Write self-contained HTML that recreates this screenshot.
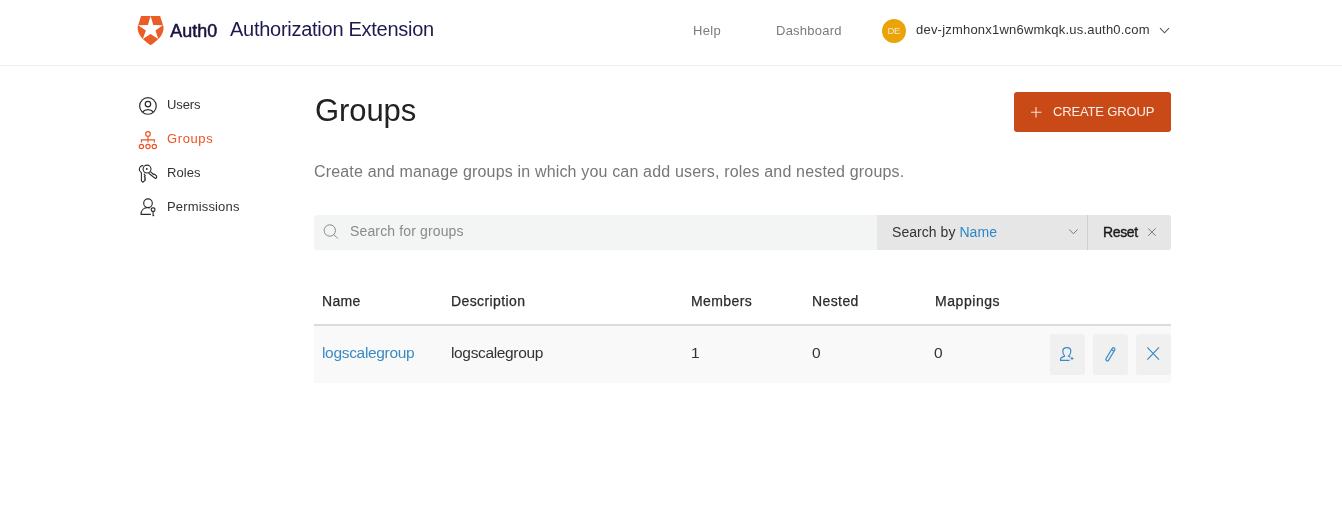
<!DOCTYPE html>
<html><head><meta charset="utf-8">
<style>
html,body{margin:0;padding:0;background:#fff;width:1342px;height:532px;overflow:hidden;position:relative;font-family:"Liberation Sans",sans-serif;}
.t{position:absolute;white-space:nowrap;line-height:1;will-change:transform;}
.a{position:absolute;}
.h{color:#2b2b2b;-webkit-text-stroke:0.25px #2b2b2b;}
</style></head><body>
<!-- header -->
<div class="a" style="left:0;top:65px;width:1342px;height:1px;background:#f0f0f0"></div>
<svg class="a" style="left:0;top:0;will-change:transform" width="460" height="60" viewBox="0 0 460 60">
  <path d="M141.1 16 L160.1 16 L163.6 27 C163.8 35.5 157.5 40.5 150.6 45.2 C143.7 40.5 137.4 35.5 137.6 27 Z" fill="#ea5d27"/>
  <polygon points="150.6,16 153.3,24.9 162.8,25.2 155.5,30.6 158.3,39.1 150.6,34 142.8,39.1 145.9,30.6 138.2,25.2 147.9,24.9" fill="#fff"/>
  <text x="170.3" y="37" font-family="Liberation Sans" font-size="19" fill="#16123f" stroke="#16123f" stroke-width="0.55" textLength="46.8" lengthAdjust="spacingAndGlyphs">Auth0</text>
</svg>
<div class="t" style="left:230px;top:19.1px;font-size:20px;letter-spacing:-0.27px;color:#1c1a4e">Authorization Extension</div>
<div class="t" style="left:692.6px;top:24.2px;letter-spacing:0.3px;font-size:13px;color:#7b7b7b">Help</div>
<div class="t" style="left:776px;top:24.2px;font-size:13px;letter-spacing:0.25px;color:#7b7b7b">Dashboard</div>
<div class="a" style="left:882px;top:19px;width:24px;height:24px;border-radius:50%;background:#eaa40a"></div>
<div class="t" style="left:882px;top:26px;width:23.4px;text-align:center;font-size:9.5px;letter-spacing:-0.35px;color:#fbe9c0">DE</div>
<div class="t" style="left:916px;top:23px;font-size:13px;letter-spacing:0.21px;color:#333">dev-jzmhonx1wn6wmkqk.us.auth0.com</div>
<svg class="a" style="left:1159px;top:27px" width="12" height="8" viewBox="0 0 12 8"><path d="M1 1.2 L5.5 5.8 L10 1.2" fill="none" stroke="#555" stroke-width="1.1"/></svg>

<!-- sidebar -->
<svg class="a" style="left:130px;top:90px" width="30" height="130" viewBox="130 90 30 130">
  <g fill="none" stroke="#2b2b2b" stroke-width="1.2">
    <circle cx="147.95" cy="105.95" r="8.3"/>
    <circle cx="147.95" cy="104.1" r="2.75"/>
    <path d="M142.6 112 C145.2 108.8 150.7 108.8 153.3 112"/>
  </g>
  <g fill="none" stroke="#eb5424" stroke-width="1.15">
    <circle cx="147.95" cy="133.9" r="2.3"/>
    <path d="M147.95 136.2 V142.5 M141.4 142.5 V139.8 H154.3 V142.5"/>
    <circle cx="141.4" cy="146.5" r="2.15"/>
    <circle cx="147.95" cy="146.5" r="2.15"/>
    <circle cx="154.3" cy="146.5" r="2.15"/>
  </g>
  <g fill="none" stroke="#2b2b2b" stroke-width="1.1">
    <path d="M143.3 165.6 C141 165.4 139.3 167.2 139.3 169.3 C139.3 170.8 140.2 172 141.4 172.7 V180.8 L142.9 182.3 L145.4 179.9 L144.6 178.9 L145.4 177.9 L144.4 176.7 L145.3 175.7 L144.3 174.6 L144.3 173.6"/>
    <circle cx="147.05" cy="169.1" r="3.95"/>
    <path d="M150.4 171.6 L153.6 174.5 L154.5 174.1 L156.6 176.1 C157 177.1 156.4 178.4 155.3 178.4 L148.7 173.3"/>
  </g>
  <circle cx="146.8" cy="169" r="0.9" fill="#2b2b2b"/>
  <g fill="none" stroke="#2b2b2b" stroke-width="1.15">
    <circle cx="148" cy="203.2" r="4.3"/>
    <path d="M150.9 214.3 H141.1 C141 210.2 143.8 207.9 146.8 207.6 C147.8 207.5 149 207.6 150 207.9"/>
    <rect x="151.3" y="207.8" width="3.6" height="3.6" rx="1.3"/>
    <path d="M153.1 211.4 V216.3 M153.1 215.5 H154.2"/>
  </g>
</svg>
<div class="t" style="left:166.5px;top:98.1px;font-size:13px;letter-spacing:-0.1px;color:#333">Users</div>
<div class="t" style="left:166.5px;top:132px;font-size:13px;letter-spacing:0.6px;color:#eb5424">Groups</div>
<div class="t" style="left:166.5px;top:166px;font-size:13px;letter-spacing:0.05px;color:#333">Roles</div>
<div class="t" style="left:166.5px;top:200px;font-size:13px;letter-spacing:0.16px;color:#333">Permissions</div>

<!-- main -->
<div class="t" style="left:314.8px;top:94.7px;font-size:31px;letter-spacing:-0.1px;color:#222">Groups</div>
<div class="a" style="left:1014px;top:92px;width:157px;height:40px;border-radius:3px;background:#c94a17"></div>
<svg class="a" style="left:1030px;top:106px" width="13" height="13" viewBox="0 0 13 13"><path d="M6 1 V11.5 M1 6.3 H11.5" stroke="#f6e0d5" stroke-width="1.1"/></svg>
<div class="t" style="left:1053px;top:105.2px;font-size:13px;letter-spacing:-0.15px;color:#fbeee8">CREATE GROUP</div>
<div class="t" style="left:314px;top:163.5px;font-size:16px;letter-spacing:0.17px;color:#777">Create and manage groups in which you can add users, roles and nested groups.</div>

<!-- search -->
<div class="a" style="left:314px;top:215px;width:857px;height:35px;border-radius:3px;background:#f3f4f4;overflow:hidden">
  <div class="a" style="left:563px;top:0;width:210px;height:35px;background:#e6e6e6"></div>
  <div class="a" style="left:773px;top:0;width:1px;height:35px;background:#cfcfcf"></div>
  <div class="a" style="left:774px;top:0;width:83px;height:35px;background:#e6e6e6"></div>
</div>
<svg class="a" style="left:320px;top:221px" width="22" height="22" viewBox="320 221 22 22"><circle cx="329.8" cy="230.5" r="5.7" fill="none" stroke="#8a8a8a" stroke-width="1"/><path d="M333.9 234.6 L337.8 238.5" stroke="#8a8a8a" stroke-width="1"/></svg>
<div class="t" style="left:350px;top:224px;font-size:14px;letter-spacing:0.14px;color:#8a8a8a">Search for groups</div>
<div class="t" style="left:892px;top:225.2px;letter-spacing:0.05px;font-size:14px;color:#333">Search by <span style="color:#2e87c6">Name</span></div>
<svg class="a" style="left:1067px;top:227px" width="13" height="9" viewBox="0 0 13 9"><path d="M2.3 2.5 L6.4 6.8 L10.5 2.5" fill="none" stroke="#777" stroke-width="1"/></svg>
<div class="t" style="left:1103px;top:224.9px;font-size:14px;letter-spacing:-0.35px;-webkit-text-stroke:0.4px #1a1a1a;color:#1a1a1a">Reset</div>
<svg class="a" style="left:1146px;top:226px" width="11" height="11" viewBox="0 0 11 11"><path d="M2.2 2.4 L9.6 9.8 M9.6 2.4 L2.2 9.8" stroke="#777" stroke-width="1"/></svg>

<!-- table -->
<div class="t h" style="left:322px;top:294.2px;font-size:14px;letter-spacing:0.3px">Name</div>
<div class="t h" style="left:451px;top:294.2px;font-size:14px;letter-spacing:0.4px">Description</div>
<div class="t h" style="left:691px;top:294.2px;font-size:14px;letter-spacing:0.4px">Members</div>
<div class="t h" style="left:812px;top:294.2px;font-size:14px;letter-spacing:0.4px">Nested</div>
<div class="t h" style="left:935px;top:294.2px;font-size:14px;letter-spacing:0.55px">Mappings</div>
<div class="a" style="left:314px;top:324px;width:857px;height:2px;background:#dcdcdc"></div>
<div class="a" style="left:314px;top:326px;width:857px;height:57px;background:#f9f9f9"></div>
<div class="t" style="left:322px;top:344.7px;font-size:15.5px;letter-spacing:-0.32px;color:#3a8bc2">logscalegroup</div>
<div class="t" style="left:451px;top:344.7px;font-size:15.5px;letter-spacing:-0.35px;color:#333">logscalegroup</div>
<div class="t" style="left:691px;top:344.7px;font-size:15.5px;color:#333">1</div>
<div class="t" style="left:812px;top:344.7px;font-size:15.5px;color:#333">0</div>
<div class="t" style="left:934px;top:344.7px;font-size:15.5px;color:#333">0</div>
<div class="a" style="left:1050px;top:334px;width:35px;height:41px;border-radius:3px;background:#f0f0f0"></div>
<div class="a" style="left:1093px;top:334px;width:35px;height:41px;border-radius:3px;background:#f0f0f0"></div>
<div class="a" style="left:1136px;top:334px;width:35px;height:41px;border-radius:3px;background:#f0f0f0"></div>
<svg class="a" style="left:1050px;top:334px" width="121" height="40" viewBox="1050 334 121 40">
  <g fill="none" stroke="#3a8bc2" stroke-width="1.2">
    <path d="M1064.9 356.1 C1063.3 355 1062.8 353 1062.8 351.2 C1062.8 348.9 1064.2 347.7 1066.8 347.7 C1069.4 347.7 1070.8 348.9 1070.8 351.2 C1070.8 353 1070.2 355 1068.5 356.1 L1070.4 357.3"/>
    <path d="M1064.9 356.1 L1061.8 357.4 C1060.9 357.8 1060.6 358.3 1060.6 359.2 V360.3 H1069.6"/>
    <g transform="translate(1110.4 354.3) rotate(31)">
      <rect x="-1.5" y="-7.4" width="3.0" height="14.8" rx="1.5"/>
      <path d="M-1.5 -4.6 H1.5"/>
    </g>
    <path d="M1147.3 347.3 L1159 359.6 M1159 347.3 L1147.3 359.6"/>
  </g>
  <path d="M1072 356.4 L1072.7 357.9 L1074.2 358.5 L1072.7 359.1 L1072 360.6 L1071.3 359.1 L1069.8 358.5 L1071.3 357.9 Z" fill="#3a8bc2"/>
</svg>
</body></html>
